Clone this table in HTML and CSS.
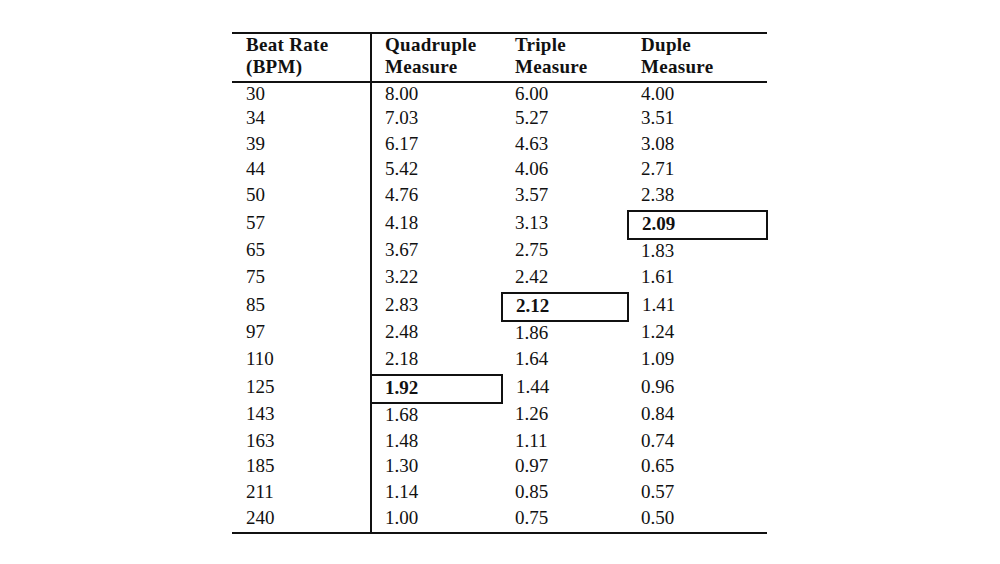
FILE: index.html
```html
<!DOCTYPE html>
<html>
<head>
<meta charset="utf-8">
<link rel="stylesheet" href="styles.css">
</head>
<body>
<table class="bpm">
<thead>
<tr><th class="c1">Beat Rate<br>(BPM)</th><th class="c2">Quadruple<br>Measure</th><th class="c3">Triple<br>Measure</th><th class="c4">Duple<br>Measure</th></tr>
</thead>
<tbody>
<tr class="first"><td class="c1">30</td><td class="c2">8.00</td><td>6.00</td><td>4.00</td></tr>
<tr><td class="c1">34</td><td class="c2">7.03</td><td>5.27</td><td>3.51</td></tr>
<tr><td class="c1">39</td><td class="c2">6.17</td><td>4.63</td><td>3.08</td></tr>
<tr><td class="c1">44</td><td class="c2">5.42</td><td>4.06</td><td>2.71</td></tr>
<tr><td class="c1">50</td><td class="c2">4.76</td><td>3.57</td><td>2.38</td></tr>
<tr class="tall"><td class="c1">57</td><td class="c2">4.18</td><td>3.13</td><td class="box">2.09</td></tr>
<tr><td class="c1">65</td><td class="c2">3.67</td><td>2.75</td><td>1.83</td></tr>
<tr><td class="c1">75</td><td class="c2">3.22</td><td>2.42</td><td>1.61</td></tr>
<tr class="tall"><td class="c1">85</td><td class="c2">2.83</td><td class="box">2.12</td><td>1.41</td></tr>
<tr><td class="c1">97</td><td class="c2">2.48</td><td>1.86</td><td>1.24</td></tr>
<tr><td class="c1">110</td><td class="c2">2.18</td><td>1.64</td><td>1.09</td></tr>
<tr class="tall"><td class="c1">125</td><td class="c2 box">1.92</td><td>1.44</td><td>0.96</td></tr>
<tr><td class="c1">143</td><td class="c2">1.68</td><td>1.26</td><td>0.84</td></tr>
<tr><td class="c1">163</td><td class="c2">1.48</td><td>1.11</td><td>0.74</td></tr>
<tr><td class="c1">185</td><td class="c2">1.30</td><td>0.97</td><td>0.65</td></tr>
<tr><td class="c1">211</td><td class="c2">1.14</td><td>0.85</td><td>0.57</td></tr>
<tr><td class="c1">240</td><td class="c2">1.00</td><td>0.75</td><td>0.50</td></tr>
</tbody>
</table>
</body>
</html>
```
FILE: styles.css
```css
html, body {
  margin: 0;
  padding: 0;
  background: #fff;
}
body {
  font-family: "Liberation Serif", "Times New Roman", serif;
  color: #111;
}
.bpm {
  border-collapse: collapse;
  margin: 32px auto 0;
  width: 533px;
  table-layout: fixed;
  border-top: 2px solid #111;
  border-bottom: 2px solid #111;
  font-size: 19px;
}
.bpm th, .bpm td {
  text-align: left;
  padding: 0 0 0 13px;
  vertical-align: top;
}
.bpm th {
  font-weight: bold;
  line-height: 22px;
  padding-top: 0;
  padding-bottom: 3px;
  border-bottom: 2px solid #111;
  letter-spacing: 0.3px;
}
.bpm .c1 { width: 124px; padding-left: 14px; border-right: 2px solid #111; }
.bpm .c2 { width: 117px; }
.bpm .c3 { width: 113px; }
.bpm .c4 { width: 126px; }
.bpm td {
  height: 24.7px;
  padding-top: 1px;
  line-height: 20px;
}
.bpm tr.first td {
  height: 23px;
  padding-top: 1px;
}
.bpm tr.tall td {
  height: 24.5px;
  padding-top: 2px;
}
.bpm td.box {
  border: 2px solid #111;
  font-weight: bold;
}
```
